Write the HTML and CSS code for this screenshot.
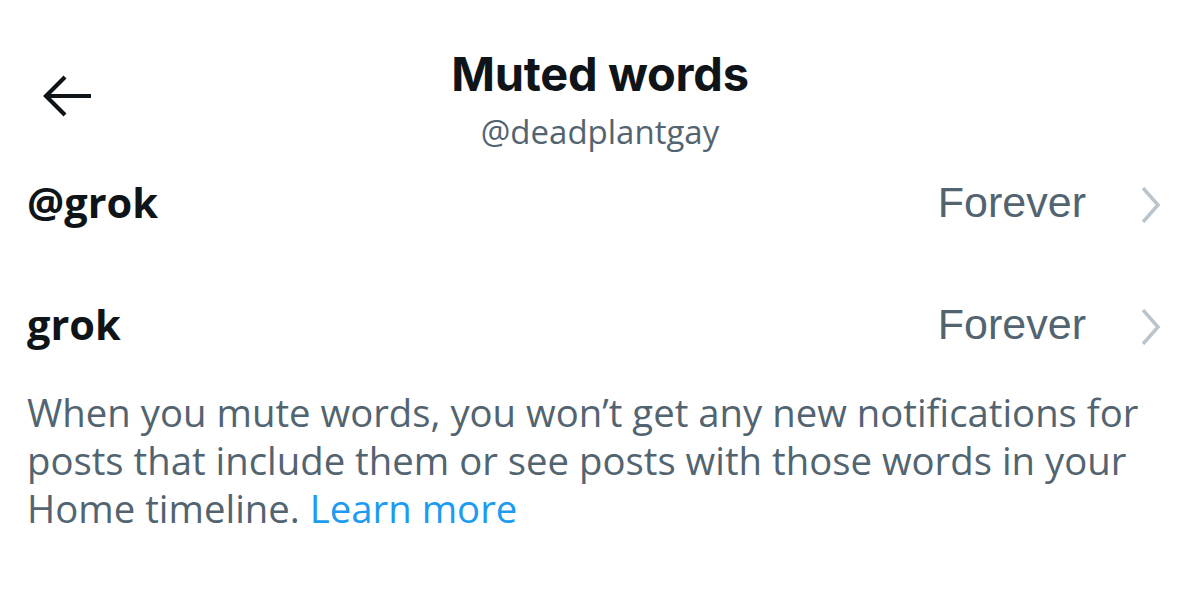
FILE: index.html
```html
<!DOCTYPE html>
<html>
<head>
<meta charset="utf-8">
<link rel="stylesheet" href="styles.css">
</head>
<body>
<div class="page">
  <header class="header">
    <div class="back">
      <svg width="52" height="44" viewBox="0 0 52 44" fill="none" stroke="#0f1419" stroke-width="4.2" stroke-linecap="butt">
        <path d="M50 22H5"/>
        <path d="M24 3L5 22L24 41"/>
      </svg>
    </div>
    <div class="titles">
      <h1 class="title">Muted words</h1>
      <div class="subtitle">@deadplantgay</div>
    </div>
  </header>
  <div class="row">
    <span class="word">@grok</span>
    <span class="dur">Forever</span>
    <svg class="chev" width="24" height="36" viewBox="0 0 24 36" fill="none" stroke="#b9c4cc" stroke-width="3.5"><path d="M4 1L19 18L4 35"/></svg>
  </div>
  <div class="row">
    <span class="word">grok</span>
    <span class="dur">Forever</span>
    <svg class="chev" width="24" height="36" viewBox="0 0 24 36" fill="none" stroke="#b9c4cc" stroke-width="3.5"><path d="M4 1L19 18L4 35"/></svg>
  </div>
  <p class="note">When you mute words, you won’t get any new notifications for posts that include them or see posts with those words in your Home timeline. <a class="link" href="#">Learn more</a></p>
</div>
</body>
</html>
```
FILE: styles.css
```css
html, body {
  margin: 0;
  padding: 0;
  background: #ffffff;
}
body {
  font-family: "Open Sans", "Noto Sans", sans-serif;
  color: #0f1419;
  width: 1200px;
  height: 607px;
  overflow: hidden;
}
.page {
  padding: 0 0 0 27px;
}
.header {
  position: relative;
  padding-top: 46px;
  padding-right: 27px;
}
.back {
  position: absolute;
  left: 14px;
  top: 74px;
  width: 52px;
  height: 44px;
}
.titles {
  display: flex;
  flex-direction: column;
  align-items: center;
}
.title {
  margin: 0;
  font-family: "Inter", "Noto Sans", sans-serif;
  font-weight: 700;
  font-size: 47px;
  line-height: 56px;
  letter-spacing: -0.3px;
  color: #0f1419;
}
.subtitle {
  font-size: 33px;
  line-height: 40px;
  color: #536471;
  margin-top: 10px;
}
.row {
  display: flex;
  align-items: flex-start;
  padding: 25px 0 47px;
  height: 50px;
}
.word {
  font-weight: 700;
  font-size: 41.5px;
  line-height: 50px;
  flex: 1;
}
.dur {
  font-family: "Liberation Sans", Arial, sans-serif;
  font-size: 43px;
  line-height: 50px;
  color: #536471;
  margin-right: 53px;
}
.chev {
  margin-top: 10px;
  margin-right: 37px;
}
.note {
  margin: -8px 0 0;
  font-size: 38.3px;
  line-height: 48px;
  color: #536471;
  width: 1146px;
}
.link {
  color: #1d9bf0;
  text-decoration: none;
}
```
